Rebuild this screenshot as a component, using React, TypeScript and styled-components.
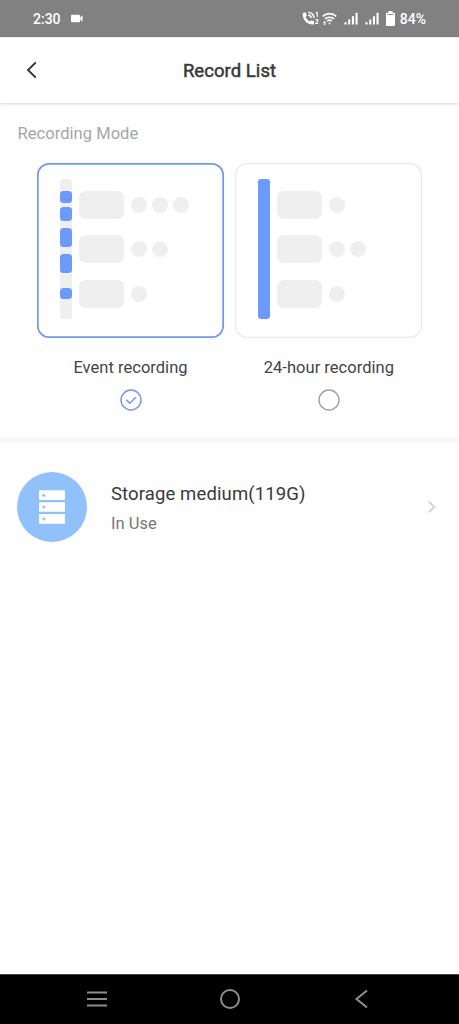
import React from "react";
import styled, { createGlobalStyle } from "styled-components";

const GlobalStyle = createGlobalStyle`
  * { box-sizing: border-box; }
  body { margin: 0; background: #fff; font-family: Roboto, sans-serif; }
`;

const Screen = styled.div`
  display: flex;
  flex-direction: column;
  width: 459px;
  height: 1024px;
  background: #fefefe;
  overflow: hidden;
`;

const StatusBar = styled.div`
  display: flex;
  align-items: center;
  flex: none;
  height: 37px;
  padding: 1px 33px 0 33px;
  background: #818181;
  color: #fff;
`;

const StatusText = styled.span<{ $left?: number }>`
  margin-left: ${(p) => p.$left ?? 0}px;
  font-size: 14px;
  line-height: 18px;
  font-weight: 500;
  white-space: nowrap;
`;

const StatusIcon = styled.svg<{ $left: number; $lift?: number }>`
  display: block;
  flex: none;
  margin-left: ${(p) => p.$left}px;
  margin-bottom: ${(p) => p.$lift ?? 0}px;
`;

const StatusGroup = styled.div`
  display: flex;
  align-items: center;
  margin-left: auto;
`;

const TitleBar = styled.header`
  display: grid;
  grid-template-columns: 60px 1fr 60px;
  align-items: center;
  flex: none;
  height: 66px;
  border-top: 1px solid #ededed;
  box-shadow: 0 1px 3px rgba(0, 0, 0, 0.16);
  background: #fff;
`;

const BackButton = styled.button`
  display: flex;
  padding: 0 0 2px 26px;
  border: 0;
  background: none;
`;

const Title = styled.h1`
  margin: 0;
  padding-top: 1px;
  text-align: center;
  font-size: 18.5px;
  line-height: 22px;
  font-weight: 400;
  letter-spacing: 0.05px;
  -webkit-text-stroke: 0.5px #383838;
  color: #383838;
`;

const SectionLabel = styled.h2`
  margin: 0;
  padding: 21px 0 0 17.5px;
  height: 60px;
  font-size: 16.5px;
  line-height: 20px;
  font-weight: 400;
  letter-spacing: 0.05px;
  color: #a6a6a6;
`;

const Modes = styled.div`
  display: flex;
  gap: 11.4px;
  flex: none;
  height: 274px;
  padding-left: 37px;
`;

const Mode = styled.div`
  display: flex;
  flex-direction: column;
  align-items: center;
  width: 187px;
`;

const Card = styled.div<{ $selected: boolean }>`
  display: flex;
  gap: 7px;
  width: 187px;
  height: 175px;
  padding-top: 16px;
  padding-left: 23px;
  border-radius: 12px;
  box-shadow: inset 0 0 0 ${(p) => (p.$selected ? "1.7px #7298ee" : "1.3px #e9e9e9")};
  background: #fff;
`;

const Track = styled.div<{ $full: boolean }>`
  display: flex;
  flex-direction: column;
  width: 12px;
  height: 139.5px;
  border-radius: 3px;
  background: ${(p) => (p.$full ? "#6b9afa" : "#efefef")};
`;

const Segment = styled.div<{ $gap: number; $size: number }>`
  flex: none;
  height: ${(p) => p.$size}px;
  margin-top: ${(p) => p.$gap}px;
  border-radius: 3.5px;
  background: #6b9afa;
`;

const Rows = styled.div`
  display: flex;
  flex-direction: column;
  gap: 16.4px;
  padding-top: 12px;
`;

const Row = styled.div`
  display: flex;
  align-items: center;
  gap: 5px;
  height: 28px;
`;

const Block = styled.div`
  width: 44.5px;
  height: 28px;
  margin-right: 2.5px;
  border-radius: 6.5px;
  background: #efefef;
`;

const Dot = styled.div`
  width: 16px;
  height: 16px;
  border-radius: 50%;
  background: #efefef;
`;

const ModeName = styled.div`
  margin-top: 20px;
  font-size: 16.5px;
  line-height: 20px;
  letter-spacing: 0.03px;
  color: #444;
  white-space: nowrap;
`;

const Radio = styled.svg`
  display: block;
  margin-top: 11px;
`;

const Divider = styled.div`
  flex: none;
  height: 6px;
  background: #f8f8f8;
`;

const StorageRow = styled.div`
  display: flex;
  align-items: center;
  flex: none;
  height: 128px;
  padding: 0 21px 0 17px;
`;

const StorageBadge = styled.div`
  display: flex;
  align-items: center;
  justify-content: center;
  width: 70px;
  height: 70px;
  border-radius: 50%;
  background: #90c1fa;
`;

const StorageText = styled.div`
  flex: 1;
  margin-left: 24px;
  padding-top: 3px;
`;

const StorageName = styled.div`
  font-size: 18.5px;
  line-height: 24px;
  letter-spacing: 0.12px;
  color: #3a3a3a;
`;

const StorageState = styled.div`
  margin-top: 7px;
  font-size: 16.5px;
  line-height: 22px;
  color: #777;
`;

const NavBar = styled.nav`
  display: flex;
  align-items: center;
  justify-content: space-between;
  flex: none;
  height: 50px;
  margin-top: auto;
  padding: 0 87px 1px 85px;
  border-top: 1px solid #444;
  background: #000;
`;

const CallIcon = () => (
  <StatusIcon $left={0} $lift={1} width="18" height="15" viewBox="0 0 18 15">
    <path d="M.8 2 3.5 1.3 4.9 4.6 3.6 6C4.5 8.1 6 9.6 8 10.5L9.5 9.2 12.2 10.6 11.7 13.5C5 14.1.1 8.3.8 2Z" fill="#fff" />
    <path d="M6.3 1.4C9.4 1.5 11.8 3.7 12 7M6.3 4.1C8 4.3 9 5.3 9.2 7" fill="none" stroke="#fff" strokeWidth="1.5" />
    <path d="M13.9 2.1 15.2 1.4V5.8M13.6 9.2C14 8.3 16.2 8.4 15.9 9.8 15.7 10.7 14.4 11.3 13.7 12.5H16.2" fill="none" stroke="#fff" strokeWidth="1.1" />
  </StatusIcon>
);

const WifiIcon = () => (
  <StatusIcon $left={2} $lift={1} width="15" height="14" viewBox="0 0 15 14">
    <path d="M.8 4.4C4.4.7 10.6.7 14.2 4.4M3 6.9C5.4 4.6 9.6 4.6 12 6.9M5.2 9.2C6.5 8 8.5 8 9.8 9.2" fill="none" stroke="#fff" strokeWidth="1.6" />
    <path d="M6.1 10.8H8.9L7.5 12.6ZM2.6 8.8 4.2 10.7H1ZM2.6 13.2 1 11.4H4.2Z" fill="#fff" />
  </StatusIcon>
);

const SignalIcon = ({ left }: { left: number }) => (
  <StatusIcon $left={left} $lift={1} width="14" height="13" viewBox="0 0 14 13">
    <path d="M.4 10.2H2.6V12.4H.4ZM4.2 7.4H6.3V12.4H4.2ZM7.9 4.3H10V12.4H7.9ZM11.5.8H13.6V12.4H11.5Z" fill="#fff" />
  </StatusIcon>
);

const BatteryIcon = () => (
  <StatusIcon $left={7} $lift={1} width="9" height="15" viewBox="0 0 9 15">
    <path d="M2.5 0H6.5V1.7H8Q9 1.7 9 2.7V14Q9 15 8 15H1Q0 15 0 14V2.7Q0 1.7 1 1.7H2.5Z" fill="#fff" />
    <path d="M1.4 3.5H7.6" stroke="#8b8b8b" strokeWidth=".9" />
  </StatusIcon>
);

const eventSegments = [
  { gap: 12, size: 11.7 },
  { gap: 4.5, size: 14 },
  { gap: 7, size: 19 },
  { gap: 6.5, size: 19.5 },
  { gap: 15, size: 10.5 },
];

const modes = [
  { name: "Event recording", selected: true, segments: eventSegments, dots: [3, 2, 1] },
  { name: "24-hour recording", selected: false, segments: [], dots: [1, 2, 1] },
];

export default function App() {
  return (
    <Screen>
      <GlobalStyle />
      <StatusBar>
        <StatusText>2:30</StatusText>
        <StatusIcon $left={10} $lift={1} width="12" height="9" viewBox="0 0 12 9">
          <path d="M1 .8H8Q9 .8 9 1.8V7.2Q9 8.2 8 8.2H1Q0 8.2 0 7.2V1.8Q0 .8 1 .8ZM9.3 3 11.5 1.6V7.4L9.3 6Z" fill="#fff" />
        </StatusIcon>
        <StatusGroup>
          <CallIcon />
          <WifiIcon />
          <SignalIcon left={7} />
          <SignalIcon left={7} />
          <BatteryIcon />
          <StatusText $left={5}>84%</StatusText>
        </StatusGroup>
      </StatusBar>
      <TitleBar>
        <BackButton aria-label="Back">
          <svg width="12" height="18" viewBox="0 0 12 18">
            <path d="M9.8 1.4 2 9 9.8 16.6" fill="none" stroke="#333" strokeWidth="1.9" />
          </svg>
        </BackButton>
        <Title>Record List</Title>
      </TitleBar>
      <SectionLabel>Recording Mode</SectionLabel>
      <Modes>
        {modes.map((mode) => (
          <Mode key={mode.name}>
            <Card $selected={mode.selected}>
              <Track $full={!mode.selected}>
                {mode.segments.map((s, i) => (
                  <Segment key={i} $gap={s.gap} $size={s.size} />
                ))}
              </Track>
              <Rows>
                {mode.dots.map((count, i) => (
                  <Row key={i}>
                    <Block />
                    {Array.from({ length: count }, (_, n) => (
                      <Dot key={n} />
                    ))}
                  </Row>
                ))}
              </Rows>
            </Card>
            <ModeName>{mode.name}</ModeName>
            <Radio width="22" height="22" viewBox="0 0 22 22" fill="none" stroke={mode.selected ? "#7395e8" : "#a0a0a0"} strokeWidth="1.4">
              <circle cx="11" cy="11" r="10" />
              {mode.selected && <path d="M6.3 10.8 9.8 14.3 15.8 8.2" />}
            </Radio>
          </Mode>
        ))}
      </Modes>
      <Divider />
      <StorageRow>
        <StorageBadge>
          <svg width="26" height="34" viewBox="0 0 26 34">
            {[0.3, 12.2, 24.1].map((y) => (
              <g key={y}>
                <rect y={y} width="26" height="9.6" rx=".8" fill="#fff" />
                <circle cx="4.8" cy={y + 4.9} r="1.5" fill="#90c1fa" />
              </g>
            ))}
          </svg>
        </StorageBadge>
        <StorageText>
          <StorageName>Storage medium(119G)</StorageName>
          <StorageState>In Use</StorageState>
        </StorageText>
        <svg width="12" height="14" viewBox="0 0 12 14">
          <path d="M2.8 1.6 8.4 7 2.8 12.4" fill="none" stroke="#d2d2d2" strokeWidth="1.9" />
        </svg>
      </StorageRow>
      <NavBar>
        <svg width="24" height="20" viewBox="0 0 24 20">
          <path d="M2 3.5H22M2 10H22M2 16.5H22" stroke="#8d8d8d" strokeWidth="2" />
        </svg>
        <svg width="22" height="22" viewBox="0 0 22 22">
          <circle cx="11" cy="11" r="9" fill="none" stroke="#8d8d8d" strokeWidth="2" />
        </svg>
        <svg width="22" height="20" viewBox="0 0 22 20">
          <path d="M17 1.5 6.5 10 17 18.5" fill="none" stroke="#8d8d8d" strokeWidth="2.1" />
        </svg>
      </NavBar>
    </Screen>
  );
}
